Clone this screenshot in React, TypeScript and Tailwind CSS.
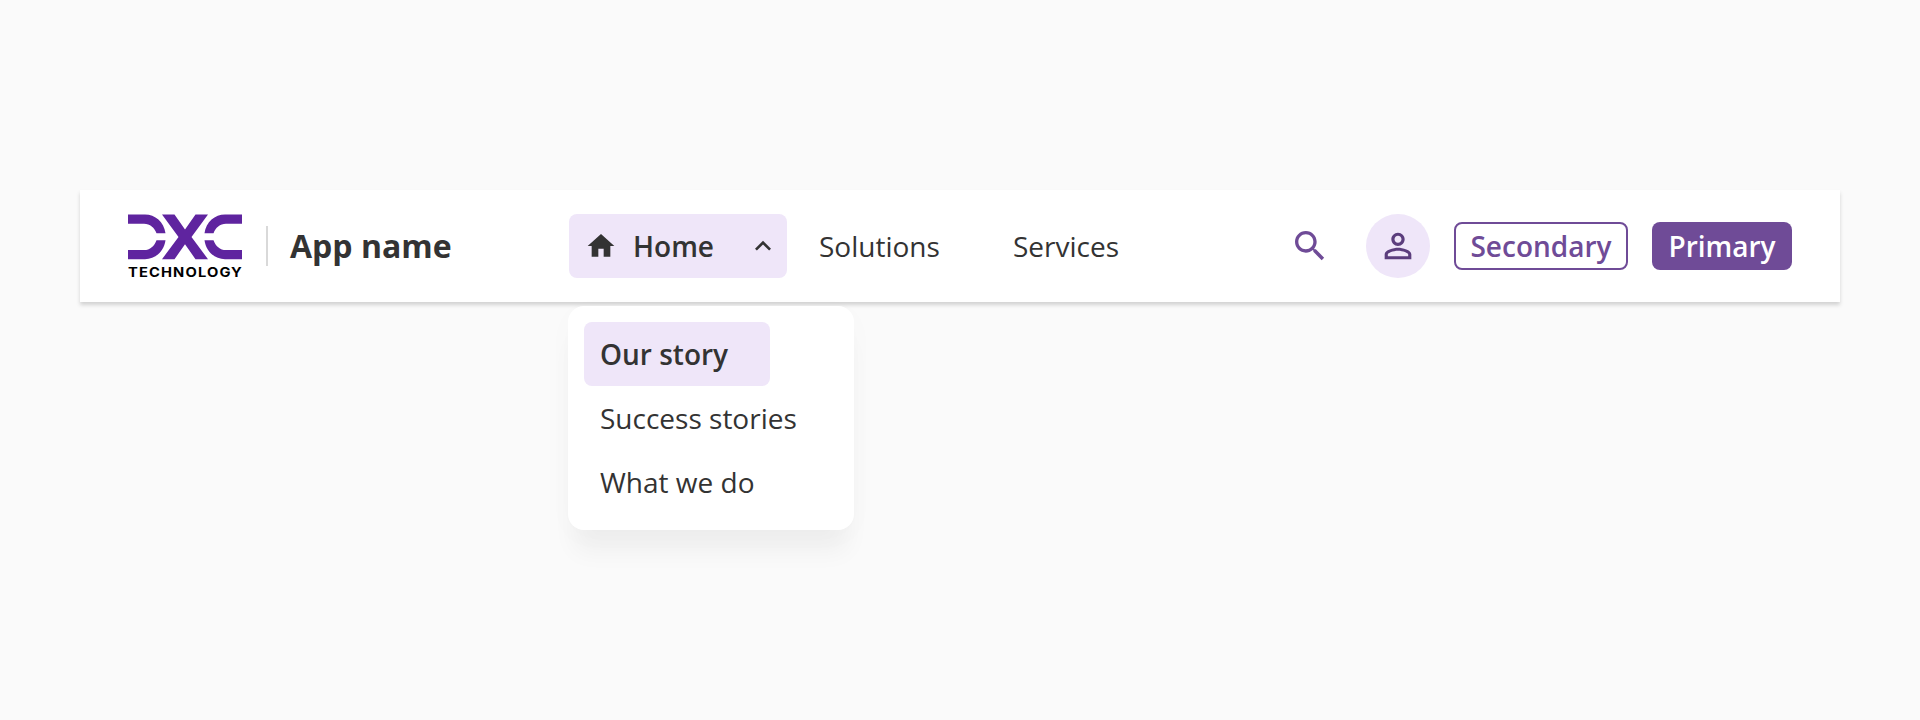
import React from "react"

const Icon = ({ path, className }: { path: string; className: string }) => (
    <svg viewBox="0 0 24 24" fill="currentColor" className={className}>
        <path d={path} />
    </svg>
)

const homePath = "M10 20v-6h4v6h5v-8h3L12 3 2 12h3v8z"
const expandLessPath = "M12 8l-6 6 1.41 1.41L12 10.83l4.59 4.58L18 14z"
const searchPath =
    "M15.5 14h-.79l-.28-.27C15.41 12.59 16 11.11 16 9.5 16 5.91 13.09 3 9.5 3S3 5.91 3 9.5 5.91 16 9.5 16c1.61 0 3.09-.59 4.23-1.57l.27.28v.79l5 4.99L20.49 19l-4.99-5zm-6 0C7.01 14 5 11.99 5 9.5S7.01 5 9.5 5 14 7.01 14 9.5 11.99 14 9.5 14z"
const personPath =
    "M12 5.9c1.16 0 2.1.94 2.1 2.1s-.94 2.1-2.1 2.1S9.9 9.16 9.9 8s.94-2.1 2.1-2.1m0 9c2.97 0 6.1 1.46 6.1 2.1v1.1H5.9V17c0-.64 3.13-2.1 6.1-2.1M12 4C9.79 4 8 5.79 8 8s1.79 4 4 4 4-1.79 4-4-1.79-4-4-4zm0 9c-2.67 0-8 1.34-8 4v3h16v-3c0-2.66-5.33-4-8-4z"

const Logo = () => (
    <svg viewBox="-2 -2 118 68" className="-mx-0.5 h-[68px] w-[118px]">
        <g fill="#5f249f">
            <path d="M0 .6H17C27 .6 36 8 37.5 19.3H28.5C26.5 13.5 22 9.7 16 9.7H0Z" />
            <path d="M0 45.2H17C27 45.2 36 37.5 37.5 26.2H28.5C26.5 32 22 36.1 16 36.1H0Z" />
            <path d="M114 .6H97C87 .6 78 8 76.5 19.3H85.5C87.5 13.5 92 9.7 98 9.7H114Z" />
            <path d="M114 45.2H97C87 45.2 78 37.5 76.5 26.2H85.5C87.5 32 92 36.1 98 36.1H114Z" />
            <path d="M34 .6H46.5L57 15.5 67.5 .6H80L63.500 22.9 80 45.2H67.5L57 30.3 46.5 45.2H34L50.500 22.9Z" />
        </g>
        <text
            x="0"
            y="63"
            textLength="115"
            lengthAdjust="spacingAndGlyphs"
            fontSize="13"
            className="fill-black font-['Inter',sans-serif] font-bold tracking-[1px]"
        >
            TECHNOLOGY
        </text>
    </svg>
)

const NavItem = ({ label, className }: { label: string; className: string }) => (
    <li className={`flex h-16 items-center rounded-lg px-4 ${className}`}>
        <a href="#">{label}</a>
    </li>
)

const HomeMenu = () => (
    <li className="relative">
        <button className="flex h-16 w-[218px] items-center rounded-lg bg-[#efe6f9] px-4 font-semibold">
            <Icon path={homePath} className="mr-4 size-8" />
            Home
            <Icon path={expandLessPath} className="-mr-2 ml-auto size-8" />
        </button>
        <ul className="absolute top-[92px] -left-px w-[286px] rounded-2xl bg-white p-4 shadow-[0_28px_24px_-6px_rgba(0,0,0,0.045),0_6px_30px_rgba(0,0,0,0.02)]">
            <NavItem label="Our story" className="w-[186px] bg-[#efe6f9] font-semibold" />
            <NavItem label="Success stories" className="" />
            <NavItem label="What we do" className="" />
        </ul>
    </li>
)

const App = () => {
    return (
        <div className="h-[720px] w-[1920px] overflow-hidden bg-[#fafafa] px-20 pt-[190px] font-['Open_Sans',sans-serif] text-[28px] text-[#333333]">
            <header className="flex h-28 items-center bg-white px-12 shadow-[0_3px_4px_rgba(0,0,0,0.16)]">
                <div className="flex w-[441px] items-center">
                    <Logo />
                    <div className="mx-6 h-10 w-0.5 bg-[#d9d9d9]" />
                    <span className="-ml-0.5 text-[32px] font-bold">App name</span>
                </div>
                <ul className="flex items-center">
                    <HomeMenu />
                    <NavItem label="Solutions" className="ml-4 w-[194px]" />
                    <NavItem label="Services" className="" />
                </ul>
                <div className="ml-auto flex items-center gap-6 font-semibold text-[#6f4b97]">
                    <button className="flex size-16 items-center justify-center">
                        <Icon path={searchPath} className="size-10" />
                    </button>
                    <button className="flex size-16 items-center justify-center rounded-full bg-[#efe6f9] text-[#5b3d7d]">
                        <Icon path={personPath} className="size-10" />
                    </button>
                    <button className="flex h-12 w-[174px] items-center justify-center rounded-lg border-2 border-[#6f4b97]">
                        Secondary
                    </button>
                    <button className="flex h-12 w-[140px] items-center justify-center rounded-lg bg-[#6f4b97] text-white">
                        Primary
                    </button>
                </div>
            </header>
        </div>
    )
}

export default App
